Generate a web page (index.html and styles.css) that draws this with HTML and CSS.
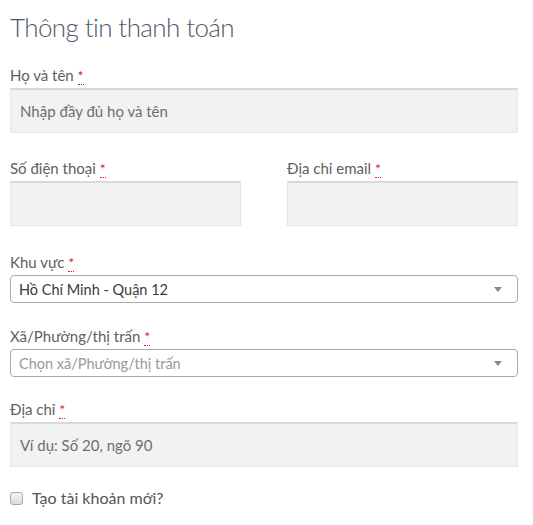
FILE: index.html
```html
<!DOCTYPE html>
<html lang="vi">
<head>
<meta charset="utf-8">
<link rel="stylesheet" href="styles.css">
</head>
<body>
<div class="form">
  <h3 class="title">Thông tin thanh toán</h3>

  <div class="field first">
    <label class="label">Họ và tên <abbr class="req">*</abbr></label>
    <div class="input"><span class="ph">Nhập đầy đủ họ và tên</span></div>
  </div>

  <div class="row">
    <div class="field">
      <label class="label">Số điện thoại <abbr class="req">*</abbr></label>
      <div class="input"></div>
    </div>
    <div class="field">
      <label class="label">Địa chỉ email <abbr class="req">*</abbr></label>
      <div class="input"></div>
    </div>
  </div>

  <div class="field sel">
    <label class="label">Khu vực <abbr class="req">*</abbr></label>
    <div class="select"><span class="val">Hồ Chí Minh - Quận 12</span><span class="arrow"></span></div>
  </div>

  <div class="field sel">
    <label class="label">Xã/Phường/thị trấn <abbr class="req">*</abbr></label>
    <div class="select"><span class="val placeholder">Chọn xã/Phường/thị trấn</span><span class="arrow"></span></div>
  </div>

  <div class="field addr">
    <label class="label">Địa chỉ <abbr class="req">*</abbr></label>
    <div class="input"><span class="ph">Ví dụ: Số 20, ngõ 90</span></div>
  </div>

  <label class="check"><span class="box"></span><span>Tạo tài khoản mới?</span></label>
</div>
</body>
</html>
```

FILE: styles.css
```css
html, body {
  margin: 0;
  padding: 0;
  background: #fff;
}
body {
  font-family: Lato, "Noto Sans", sans-serif;
  color: #555;
}
.form {
  width: 508px;
  padding: 0 0 0 10px;
}
.title {
  margin: 0;
  padding-top: 11px;
  font-size: 26px;
  line-height: 32px;
  font-weight: 300;
  color: #4e5868;
  letter-spacing: -0.6px;
}
.field {
  display: flex;
  flex-direction: column;
}
.label {
  display: block;
  font-size: 15px;
  line-height: 20px;
  color: #606060;
  margin-bottom: 2px;
}
.req {
  color: #e0181e;
  text-decoration: none;
  border-bottom: 1px dotted #e0181e;
  font-size: 14px;
}
.first { margin-top: 22px; }
.input {
  height: 45px;
  box-sizing: border-box;
  background: #f2f2f2;
  border: 1px solid #e6e6e6;
  border-top: 2px solid #d9d9d9;
  display: flex;
  align-items: center;
  padding-left: 9px;
  font-size: 15px;
  color: #6e6e6e;
}
.row {
  display: flex;
  gap: 46px;
  margin-top: 25px;
}
.row .field { flex: 1; }
.sel { margin-top: 26px; }
.sel + .sel { margin-top: 23px; }
.select {
  height: 28px;
  box-sizing: border-box;
  border: 1px solid #aaa;
  border-radius: 4px;
  background: #fff;
  display: flex;
  align-items: center;
  padding-left: 8px;
  font-size: 14.5px;
  color: #3a3a3a;
}
.val.placeholder { color: #999; }
.arrow {
  margin-left: auto;
  margin-right: 15px;
  width: 0;
  height: 0;
  border-style: solid;
  border-width: 5px 4px 0 4px;
  border-color: #888 transparent transparent transparent;
}
.addr { margin-top: 22px; }
.check {
  display: flex;
  align-items: center;
  margin-top: 21px;
  font-size: 16px;
  line-height: 20px;
  color: #555;
}
.box {
  width: 11px;
  height: 11px;
  border: 1px solid #a9a9a9;
  border-radius: 3px;
  background: linear-gradient(#f4f4f4, #dcdcdc);
  margin-right: 9px;
}
```
